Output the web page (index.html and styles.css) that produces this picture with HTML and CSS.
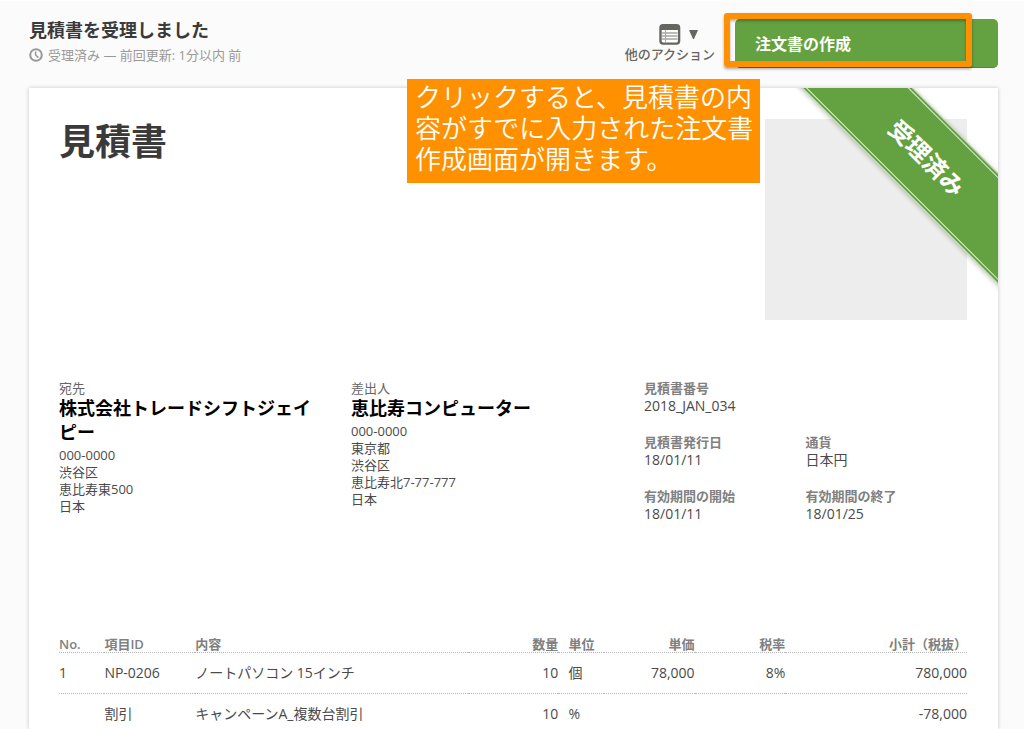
FILE: index.html
```html
<!DOCTYPE html>
<html lang="ja">
<head>
<meta charset="utf-8">
<title>見積書</title>
<link rel="stylesheet" href="styles.css">
</head>
<body>
<header class="topbar">
  <div class="status">
    <h1 class="status-title">見積書を受理しました</h1>
    <p class="status-meta">
      <svg class="clock" viewBox="0 0 14 14" aria-hidden="true"><circle cx="7" cy="7" r="5.8"/><path d="M6.6 3.6V7L9.4 9.6"/></svg>
      <span>受理済み — 前回更新: 1分以内 前</span>
    </p>
  </div>
  <div class="actions">
    <button class="more" type="button">
      <span class="more-icons">
        <svg class="list" viewBox="0 0 22 21" aria-hidden="true"><rect x="1.5" y="1.2" width="18.6" height="18.4" rx="2.5" fill="#fff" stroke="#666660" stroke-width="2.4"/><path d="M1.500 1.500h18.600V6H1.500z" fill="#666660"/><path d="M3 9h15.500M3 12h15.500M3 15h15.500" stroke="#777771" stroke-width="1"/><path d="M6.500 6v12.500" stroke="#aaaaa5" stroke-width="1"/></svg>
        <svg class="caret" viewBox="0 0 9 9" aria-hidden="true"><path d="M0 0h9L5 9H4z" fill="#666660"/></svg>
      </span>
      <span>他のアクション</span>
    </button>
    <div class="cta-wrap">
      <button class="cta" type="button">注文書の作成</button>
      <span class="highlight"></span>
    </div>
  </div>
  <p class="callout">クリックすると、見積書の内容がすでに入力された注文書作成画面が開きます。</p>
</header>
<main class="sheet">
  <div class="ribbon-clip"><div class="ribbon"><span>受理済み</span></div></div>
  <section class="heading">
    <h2 class="doc-title">見積書</h2>
    <div class="logo"></div>
  </section>
  <section class="parties">
    <div class="party">
      <p class="party-label">宛先</p>
      <h3 class="party-name">株式会社トレードシフトジェイピー</h3>
      <address class="address">000-0000<br>渋谷区<br>恵比寿東500<br>日本</address>
    </div>
    <div class="party">
      <p class="party-label">差出人</p>
      <h3 class="party-name">恵比寿コンピューター</h3>
      <address class="address">000-0000<br>東京都<br>渋谷区<br>恵比寿北7-77-777<br>日本</address>
    </div>
    <dl class="facts">
      <div class="fact wide"><dt>見積書番号</dt><dd>2018_JAN_034</dd></div>
      <div class="fact"><dt>見積書発行日</dt><dd>18/01/11</dd></div>
      <div class="fact"><dt>通貨</dt><dd>日本円</dd></div>
      <div class="fact"><dt>有効期間の開始</dt><dd>18/01/11</dd></div>
      <div class="fact"><dt>有効期間の終了</dt><dd>18/01/25</dd></div>
    </dl>
  </section>
  <table class="lines">
    <colgroup><col class="c5"><col class="c10"><col class="c30"><col class="c10"><col class="c5"><col class="c10"><col class="c10"><col class="c20"></colgroup>
    <thead>
      <tr><th>No.</th><th>項目ID</th><th>内容</th><th class="num">数量</th><th class="unit">単位</th><th class="num">単価</th><th class="num">税率</th><th class="num">小計（税抜）</th></tr>
    </thead>
    <tbody>
      <tr><td>1</td><td>NP-0206</td><td>ノートパソコン 15インチ</td><td class="num">10</td><td class="unit">個</td><td class="num">78,000</td><td class="num">8%</td><td class="num">780,000</td></tr>
      <tr><td></td><td>割引</td><td>キャンペーンA_複数台割引</td><td class="num">10</td><td class="unit">%</td><td></td><td></td><td class="num">-78,000</td></tr>
    </tbody>
  </table>
</main>
</body>
</html>
```
FILE: styles.css
```css
* { box-sizing: border-box; margin: 0; padding: 0; }
body {
  height: 100vh;
  display: flex;
  flex-direction: column;
  overflow: hidden;
  padding: 0 26px 0 29px;
  background: #fbfbfb;
  border-top: 1px solid #fff;
  color: #4a4a4a;
  font: 14px/20px "Open Sans", "Noto Sans CJK JP", sans-serif;
}
button { border: 0; background: none; font: inherit; color: inherit; cursor: pointer; }

.topbar {
  position: relative;
  display: flex;
  justify-content: space-between;
  align-items: flex-start;
  padding: 18px 0 20px;
}
.status-title { font-size: 18px; line-height: 22px; font-weight: 600; color: #3a3a3a; }
.status-meta {
  display: flex;
  align-items: center;
  gap: 5px;
  margin-top: 4px;
  font-size: 13px;
  line-height: 20px;
  color: #999;
}
.clock { width: 14px; height: 14px; fill: none; stroke: #999; stroke-width: 2; }
.clock path { stroke-width: 1.5; }
.actions { display: flex; gap: 20px; }
.more {
  display: flex;
  flex-direction: column;
  align-items: center;
  padding-top: 5px;
  font-size: 13px;
  line-height: 18px;
  font-weight: 500;
  color: #666660;
}
.more-icons { display: flex; align-items: center; gap: 8px; padding-left: 18px; }
.list { width: 22px; height: 21px; }
.caret { width: 9px; height: 9px; }
.cta-wrap { position: relative; }
.cta {
  width: 263px;
  height: 49px;
  padding: 2px 20px 0;
  border-radius: 5px;
  border-bottom: 1px solid #4f8a2e;
  background: #64a140;
  color: #fff;
  font-size: 16px;
  font-weight: 600;
  text-align: left;
}
.highlight {
  position: absolute;
  inset: -6px 26px 1px -11px;
  border: 6px solid #ff9100;
  border-radius: 3px;
  box-shadow: 0 2px 3px rgba(0, 0, 0, .35), inset 0 2px 3px rgba(0, 0, 0, .3);
  pointer-events: none;
}
.callout {
  position: absolute;
  z-index: 2;
  top: 78px;
  right: 238px;
  width: 353px;
  padding: 1px 0 10px 8px;
  background: #ff9100;
  color: #fff;
  font-size: 26px;
  line-height: 31px;
  font-weight: 350;
  font-family: "Noto Sans CJK JP", sans-serif;
}

.sheet {
  position: relative;
  flex: 1;
  min-height: 0;
  padding: 31px 31px 0 30px;
  background: #fff;
  box-shadow: 0 0 4px rgba(0, 0, 0, .22);
}
.ribbon-clip {
  position: absolute;
  top: 0;
  right: 0;
  width: 210px;
  height: 210px;
  overflow: hidden;
}
.ribbon {
  position: absolute;
  top: 28px;
  right: -87px;
  width: 320px;
  height: 79px;
  padding: 2px 0;
  border: solid #e4efdc;
  border-width: 1px 0;
  background: #64a140;
  box-shadow: 0 1px 5px rgba(0, 0, 0, .25);
  transform: rotate(45deg);
}
.ribbon span {
  display: block;
  padding-left: 6px;
  border: solid #e4efdc;
  border-width: 1px 0;
  color: #fff;
  font-size: 24px;
  line-height: 71px;
  font-weight: 700;
  text-align: center;
}
.heading { display: flex; justify-content: space-between; }
.doc-title { font-size: 36px; line-height: 46px; font-weight: 600; color: #3a3a3a; }
.logo { width: 202px; height: 201px; background: #ededed; }

.parties {
  display: grid;
  grid-template-columns: 292fr 293fr 323fr;
  min-height: 246px;
  margin-top: 60px;
}
.party { padding-right: 30px; }
.party-label { font-size: 13px; line-height: 16px; color: #666; }
.party-name { font-size: 18px; line-height: 24px; font-weight: 600; color: #000; }
.address { margin-top: 3px; font-size: 13px; line-height: 17px; font-style: normal; }
.facts { display: grid; grid-template-columns: 1fr 1fr; align-content: start; row-gap: 19px; }
.wide { grid-column: 1 / -1; }
.fact dt { font-size: 13px; line-height: 17px; font-weight: 600; color: #808080; }
.fact dd { font-size: 14px; line-height: 18px; }

.lines { width: 100%; table-layout: fixed; border-collapse: collapse; }
.c5 { width: 5%; }
.c10 { width: 10%; }
.c20 { width: 20%; }
.c30 { width: 30%; }
.lines th, .lines td { border-bottom: 1px dotted #b5b5b5; text-align: left; white-space: nowrap; }
.lines th {
  height: 26px;
  font-size: 13px;
  line-height: 16px;
  font-weight: 600;
  color: #808080;
  vertical-align: bottom;
}
.lines td { height: 41px; }
.lines .num { text-align: right; }
.lines .unit { padding-left: 10px; }
```
